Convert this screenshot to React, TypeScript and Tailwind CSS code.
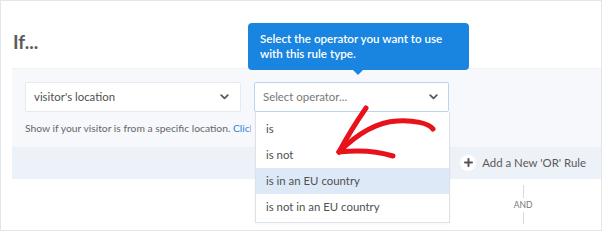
import React from "react";

const Chevron = ({ className = "" }: { className?: string }) => (
  <svg width="9" height="6" viewBox="0 0 9 6" className={className}>
    <path d="M1.2 1.2 L4.5 4.4 L7.8 1.2" fill="none" stroke="#5a5a5a" strokeWidth="1.8" strokeLinecap="round" strokeLinejoin="round" />
  </svg>
);

export default function App() {
  const items = ["is", "is not", "is in an EU country", "is not in an EU country"];
  return (
    <div
      className="relative w-[602px] h-[231px] overflow-hidden bg-white border border-[#e3e5e8] text-[#555]"
      style={{ fontFamily: "Lato, 'Open Sans', Arial, sans-serif" }}
    >
      <div className="h-[67px] pl-[12px] pt-[29px]">
        <h2 className="text-[19px] leading-[24px] font-bold text-[#5b5b5b]">If...</h2>
      </div>

      <div className="ml-[11px] bg-[#f6f8fc] border-t border-[#eef1f6]">
        <div className="px-[13px] pt-[13px] h-[78px]">
          <div className="flex gap-[13px]">
            <div className="w-[216px] h-[30px] bg-white border border-[#e6e9ee] rounded-[2px] flex items-center justify-between pl-[8px] pr-[11px]">
              <span className="text-[11.4px] text-[#505050]">visitor's location</span>
              <Chevron />
            </div>
            <div className="w-[195px] h-[30px] bg-white border border-[#bcd2f1] rounded-[2px] flex items-center justify-between pl-[8px] pr-[10px]">
              <span className="text-[11.4px] text-[#777]">Select operator...</span>
              <Chevron />
            </div>
          </div>
          <div className="mt-[9px] w-[226px] overflow-hidden">
            <p className="text-[10.3px] leading-[14px] text-[#666] whitespace-nowrap">
              Show if your visitor is from a specific location. <span className="text-[#2a86d9]">Click</span>
            </p>
          </div>
        </div>
        <div className="h-[32px] bg-[#edf1f8] flex items-center justify-end pr-[15px]">
          <div className="flex items-center gap-[6px]">
            <span className="w-[16px] h-[16px] rounded-full bg-white flex items-center justify-center">
              <svg width="9" height="9" viewBox="0 0 9 9">
                <path d="M4.5 1 V8 M1 4.5 H8" stroke="#555" strokeWidth="2" strokeLinecap="round" />
              </svg>
            </span>
            <span className="text-[11.4px] text-[#5a5a5a]">Add a New 'OR' Rule</span>
          </div>
        </div>
      </div>

      <div className="ml-[11px] flex justify-end pr-[58px]">
        <div className="w-[40px] flex flex-col items-center pt-[6px]">
          <div className="w-px h-[13px] bg-[#d6d9de]" />
          <span className="text-[8.5px] leading-[12px] text-[#777] my-[1px]">AND</span>
          <div className="w-px h-[12px] bg-[#d6d9de]" />
        </div>
      </div>

      {/* Tooltip */}
      <div className="absolute left-[247px] top-[22px] w-[221px] h-[47px] bg-[#1985e0] rounded-[4px] px-[12px] pt-[8px] text-white text-[11.6px] leading-[15px] font-semibold">
        Select the operator you want to use
        <br />
        with this rule type.
        <div className="absolute left-[104px] top-[46px] w-0 h-0 border-l-[6px] border-r-[6px] border-t-[6px] border-l-transparent border-r-transparent border-t-[#1985e0]" />
      </div>

      {/* Dropdown */}
      <div className="absolute left-[254px] top-[111px] w-[195px] h-[111px] bg-white border border-[#dde2ea] border-t-0 pt-[4px] shadow-[0_1px_2px_rgba(0,0,0,0.04)]">
        {items.map((t, i) => (
          <div
            key={t}
            className={`h-[26px] flex items-center pl-[10px] text-[11.4px] text-[#505050] ${i === 2 ? "bg-[#dee9f8]" : ""}`}
          >
            {t}
          </div>
        ))}
      </div>

      {/* Red hand-drawn arrow */}
      <svg className="absolute left-0 top-0 pointer-events-none" width="602" height="231" viewBox="0 0 602 231">
        <g fill="none" stroke="#e8121a" strokeWidth="5" strokeLinecap="round" strokeLinejoin="round">
          <path d="M432 128 C428 122 412 119 396 120 C378 121 358 131 338 151" />
          <path d="M365 107 C356 120 346 136 338 151" />
          <path d="M338 151 C356 149 376 150 392 155" />
        </g>
      </svg>
    </div>
  );
}
